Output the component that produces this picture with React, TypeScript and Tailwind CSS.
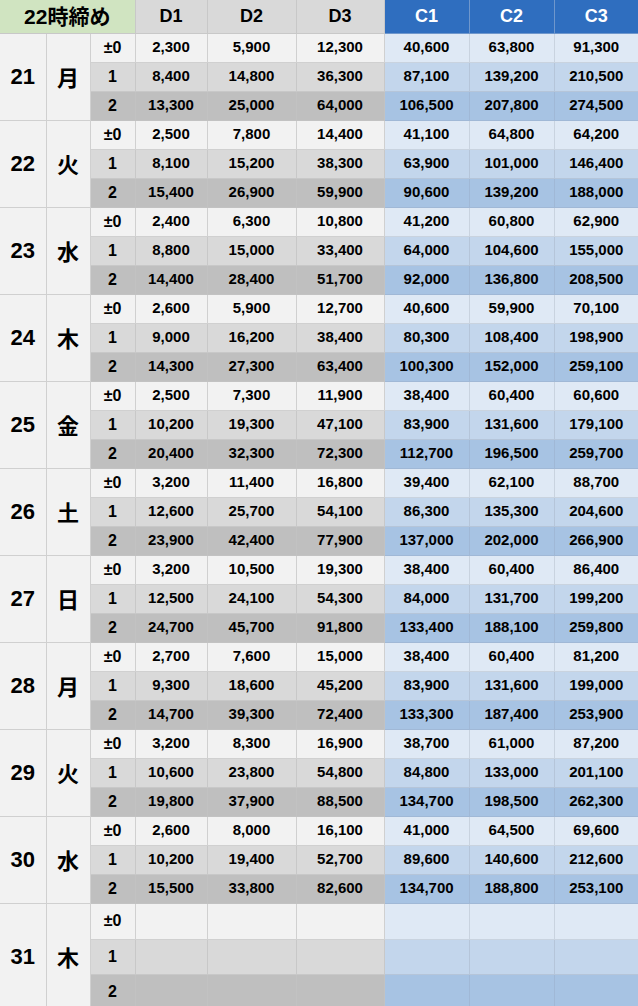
const days: { d: string; w: string; rows: string[][] }[] = [
  {
    d: "21",
    w: "月",
    rows: [
      ["2,300", "5,900", "12,300", "40,600", "63,800", "91,300"],
      ["8,400", "14,800", "36,300", "87,100", "139,200", "210,500"],
      ["13,300", "25,000", "64,000", "106,500", "207,800", "274,500"],
    ],
  },
  {
    d: "22",
    w: "火",
    rows: [
      ["2,500", "7,800", "14,400", "41,100", "64,800", "64,200"],
      ["8,100", "15,200", "38,300", "63,900", "101,000", "146,400"],
      ["15,400", "26,900", "59,900", "90,600", "139,200", "188,000"],
    ],
  },
  {
    d: "23",
    w: "水",
    rows: [
      ["2,400", "6,300", "10,800", "41,200", "60,800", "62,900"],
      ["8,800", "15,000", "33,400", "64,000", "104,600", "155,000"],
      ["14,400", "28,400", "51,700", "92,000", "136,800", "208,500"],
    ],
  },
  {
    d: "24",
    w: "木",
    rows: [
      ["2,600", "5,900", "12,700", "40,600", "59,900", "70,100"],
      ["9,000", "16,200", "38,400", "80,300", "108,400", "198,900"],
      ["14,300", "27,300", "63,400", "100,300", "152,000", "259,100"],
    ],
  },
  {
    d: "25",
    w: "金",
    rows: [
      ["2,500", "7,300", "11,900", "38,400", "60,400", "60,600"],
      ["10,200", "19,300", "47,100", "83,900", "131,600", "179,100"],
      ["20,400", "32,300", "72,300", "112,700", "196,500", "259,700"],
    ],
  },
  {
    d: "26",
    w: "土",
    rows: [
      ["3,200", "11,400", "16,800", "39,400", "62,100", "88,700"],
      ["12,600", "25,700", "54,100", "86,300", "135,300", "204,600"],
      ["23,900", "42,400", "77,900", "137,000", "202,000", "266,900"],
    ],
  },
  {
    d: "27",
    w: "日",
    rows: [
      ["3,200", "10,500", "19,300", "38,400", "60,400", "86,400"],
      ["12,500", "24,100", "54,300", "84,000", "131,700", "199,200"],
      ["24,700", "45,700", "91,800", "133,400", "188,100", "259,800"],
    ],
  },
  {
    d: "28",
    w: "月",
    rows: [
      ["2,700", "7,600", "15,000", "38,400", "60,400", "81,200"],
      ["9,300", "18,600", "45,200", "83,900", "131,600", "199,000"],
      ["14,700", "39,300", "72,400", "133,300", "187,400", "253,900"],
    ],
  },
  {
    d: "29",
    w: "火",
    rows: [
      ["3,200", "8,300", "16,900", "38,700", "61,000", "87,200"],
      ["10,600", "23,800", "54,800", "84,800", "133,000", "201,100"],
      ["19,800", "37,900", "88,500", "134,700", "198,500", "262,300"],
    ],
  },
  {
    d: "30",
    w: "水",
    rows: [
      ["2,600", "8,000", "16,100", "41,000", "64,500", "69,600"],
      ["10,200", "19,400", "52,700", "89,600", "140,600", "212,600"],
      ["15,500", "33,800", "82,600", "134,700", "188,800", "253,100"],
    ],
  },
  {
    d: "31",
    w: "木",
    rows: [
      ["", "", "", "", "", ""],
      ["", "", "", "", "", ""],
      ["", "", "", "", "", ""],
    ],
  },
];

const offsets = ["±0", "1", "2"];
const grayBg = ["bg-[#f2f2f2]", "bg-[#d9d9d9]", "bg-[#bfbfbf]"];
const blueBg = ["bg-[#dfe9f5]", "bg-[#c3d6ec]", "bg-[#a7c3e3]"];
const grayBorder = ["border-[#d0d0d0]", "border-[#c8c8c8]", "border-[#c2c2c2]"];
const blueBorder = ["border-[#c9d3df]", "border-[#b5c5d9]", "border-[#a0b8d6]"];

export default function App() {
  return (
    <div className="w-[638px] h-[1006px] overflow-hidden bg-white font-['Liberation_Sans','Noto_Sans_CJK_JP',sans-serif] font-bold text-black">
      <table className="w-[638px] table-fixed border-collapse">
        <colgroup>
          <col className="w-[46px]" />
          <col className="w-[44px]" />
          <col className="w-[45px]" />
          <col className="w-[72px]" />
          <col className="w-[89px]" />
          <col className="w-[88px]" />
          <col className="w-[85px]" />
          <col className="w-[85px]" />
          <col className="w-[84px]" />
        </colgroup>
        <thead>
          <tr className="h-[33px]">
            <th
              colSpan={3}
              className="bg-[#d0e4c1] border border-[#c8c8c8] border-t-0 border-l-0 text-[21px] p-0"
            >
              22時締め
            </th>
            {["D1", "D2", "D3"].map((h) => (
              <th
                key={h}
                className="bg-[#d9d9d9] border border-[#c8c8c8] border-t-0 text-[18px] p-0"
              >
                {h}
              </th>
            ))}
            {["C1", "C2", "C3"].map((h) => (
              <th
                key={h}
                className="bg-[#2f6ebf] text-white border border-[#6f97cc] border-t-0 last:border-r-0 text-[18px] p-0"
              >
                {h}
              </th>
            ))}
          </tr>
        </thead>
        <tbody>
          {days.map((day, di) => {
            const last = di === days.length - 1;
            return day.rows.map((vals, ri) => (
              <tr
                key={day.d + ri}
                className={
                  last ? (ri === 0 ? "h-[36px]" : "h-[35px]") : "h-[29px]"
                }
              >
                {ri === 0 && (
                  <>
                    <td
                      rowSpan={3}
                      className="bg-[#f2f2f2] border border-l-0 border-[#d0d0d0] text-center text-[22px] p-0"
                    >
                      {day.d}
                    </td>
                    <td
                      rowSpan={3}
                      className="bg-[#f2f2f2] border border-[#d0d0d0] text-center text-[22px] p-0 font-['Noto_Sans_CJK_JP',sans-serif]"
                    >
                      {day.w}
                    </td>
                  </>
                )}
                <td
                  className={`${grayBg[ri]} ${grayBorder[ri]} border text-center text-[16px] p-0`}
                >
                  {offsets[ri]}
                </td>
                {vals.map((v, ci) => (
                  <td
                    key={ci}
                    className={`${ci < 3 ? grayBg[ri] : blueBg[ri]} ${
                      ci < 3 ? grayBorder[ri] : blueBorder[ri]
                    } border last:border-r-0 text-center text-[15px] p-0`}
                  >
                    {v}
                  </td>
                ))}
              </tr>
            ));
          })}
        </tbody>
      </table>
    </div>
  );
}
